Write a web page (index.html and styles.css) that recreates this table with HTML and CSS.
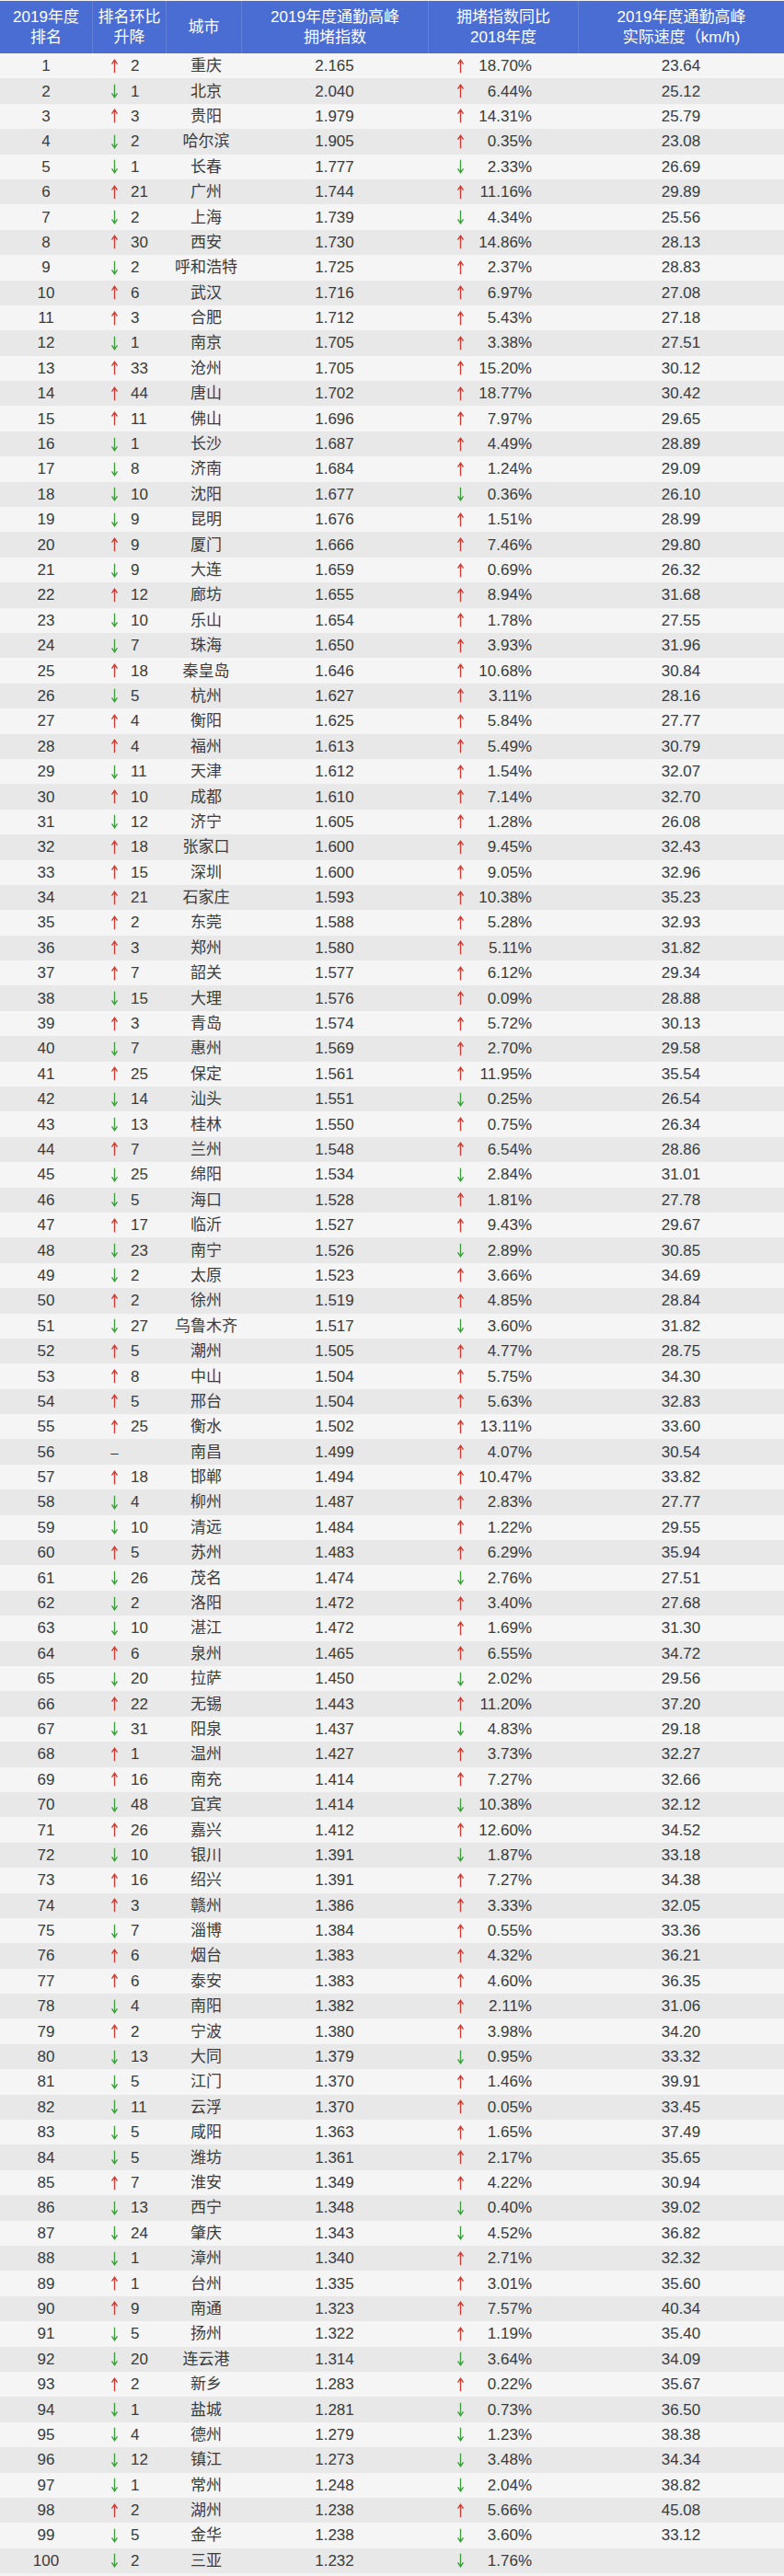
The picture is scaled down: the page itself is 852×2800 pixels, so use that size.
FILE: index.html
```html
<!DOCTYPE html>
<html lang="zh-CN">
<head>
<meta charset="utf-8">
<title>2019年度通勤高峰拥堵指数排名</title>
<link rel="stylesheet" href="styles.css">
</head>
<body>
<svg class="defs" width="0" height="0" aria-hidden="true">
  <symbol id="up" viewBox="0 0 10 18"><path d="M5 17.2V1.6M1.6 6.2L5 1.4L8.4 6.2" fill="none" stroke="currentColor" stroke-width="1.5"/></symbol>
  <symbol id="dn" viewBox="0 0 10 18"><path d="M5 0.8V16.4M1.6 11.8L5 16.6L8.4 11.8" fill="none" stroke="currentColor" stroke-width="1.5"/></symbol>
</svg>
<div class="table">
  <div class="head">
    <div class="hc">2019年度<br>排名</div>
    <div class="hc">排名环比<br>升降</div>
    <div class="hc">城市</div>
    <div class="hc">2019年度通勤高峰<br>拥堵指数</div>
    <div class="hc">拥堵指数同比<br>2018年度</div>
    <div class="hc">2019年度通勤高峰<br>实际速度（km/h)</div>
  </div>
  <div class="rows" id="rows">
<div class="row"><div class="c rank">1</div><div class="c chg"><svg class="ar u"><use href="#up"/></svg><span>2</span></div><div class="c city">重庆</div><div class="c idx">2.165</div><div class="c pc"><svg class="ar u"><use href="#up"/></svg><span>18.70%</span></div><div class="c spd">23.64</div></div>
<div class="row"><div class="c rank">2</div><div class="c chg"><svg class="ar d"><use href="#dn"/></svg><span>1</span></div><div class="c city">北京</div><div class="c idx">2.040</div><div class="c pc"><svg class="ar u"><use href="#up"/></svg><span>6.44%</span></div><div class="c spd">25.12</div></div>
<div class="row"><div class="c rank">3</div><div class="c chg"><svg class="ar u"><use href="#up"/></svg><span>3</span></div><div class="c city">贵阳</div><div class="c idx">1.979</div><div class="c pc"><svg class="ar u"><use href="#up"/></svg><span>14.31%</span></div><div class="c spd">25.79</div></div>
<div class="row"><div class="c rank">4</div><div class="c chg"><svg class="ar d"><use href="#dn"/></svg><span>2</span></div><div class="c city">哈尔滨</div><div class="c idx">1.905</div><div class="c pc"><svg class="ar u"><use href="#up"/></svg><span>0.35%</span></div><div class="c spd">23.08</div></div>
<div class="row"><div class="c rank">5</div><div class="c chg"><svg class="ar d"><use href="#dn"/></svg><span>1</span></div><div class="c city">长春</div><div class="c idx">1.777</div><div class="c pc"><svg class="ar d"><use href="#dn"/></svg><span>2.33%</span></div><div class="c spd">26.69</div></div>
<div class="row"><div class="c rank">6</div><div class="c chg"><svg class="ar u"><use href="#up"/></svg><span>21</span></div><div class="c city">广州</div><div class="c idx">1.744</div><div class="c pc"><svg class="ar u"><use href="#up"/></svg><span>11.16%</span></div><div class="c spd">29.89</div></div>
<div class="row"><div class="c rank">7</div><div class="c chg"><svg class="ar d"><use href="#dn"/></svg><span>2</span></div><div class="c city">上海</div><div class="c idx">1.739</div><div class="c pc"><svg class="ar d"><use href="#dn"/></svg><span>4.34%</span></div><div class="c spd">25.56</div></div>
<div class="row"><div class="c rank">8</div><div class="c chg"><svg class="ar u"><use href="#up"/></svg><span>30</span></div><div class="c city">西安</div><div class="c idx">1.730</div><div class="c pc"><svg class="ar u"><use href="#up"/></svg><span>14.86%</span></div><div class="c spd">28.13</div></div>
<div class="row"><div class="c rank">9</div><div class="c chg"><svg class="ar d"><use href="#dn"/></svg><span>2</span></div><div class="c city">呼和浩特</div><div class="c idx">1.725</div><div class="c pc"><svg class="ar u"><use href="#up"/></svg><span>2.37%</span></div><div class="c spd">28.83</div></div>
<div class="row"><div class="c rank">10</div><div class="c chg"><svg class="ar u"><use href="#up"/></svg><span>6</span></div><div class="c city">武汉</div><div class="c idx">1.716</div><div class="c pc"><svg class="ar u"><use href="#up"/></svg><span>6.97%</span></div><div class="c spd">27.08</div></div>
<div class="row"><div class="c rank">11</div><div class="c chg"><svg class="ar u"><use href="#up"/></svg><span>3</span></div><div class="c city">合肥</div><div class="c idx">1.712</div><div class="c pc"><svg class="ar u"><use href="#up"/></svg><span>5.43%</span></div><div class="c spd">27.18</div></div>
<div class="row"><div class="c rank">12</div><div class="c chg"><svg class="ar d"><use href="#dn"/></svg><span>1</span></div><div class="c city">南京</div><div class="c idx">1.705</div><div class="c pc"><svg class="ar u"><use href="#up"/></svg><span>3.38%</span></div><div class="c spd">27.51</div></div>
<div class="row"><div class="c rank">13</div><div class="c chg"><svg class="ar u"><use href="#up"/></svg><span>33</span></div><div class="c city">沧州</div><div class="c idx">1.705</div><div class="c pc"><svg class="ar u"><use href="#up"/></svg><span>15.20%</span></div><div class="c spd">30.12</div></div>
<div class="row"><div class="c rank">14</div><div class="c chg"><svg class="ar u"><use href="#up"/></svg><span>44</span></div><div class="c city">唐山</div><div class="c idx">1.702</div><div class="c pc"><svg class="ar u"><use href="#up"/></svg><span>18.77%</span></div><div class="c spd">30.42</div></div>
<div class="row"><div class="c rank">15</div><div class="c chg"><svg class="ar u"><use href="#up"/></svg><span>11</span></div><div class="c city">佛山</div><div class="c idx">1.696</div><div class="c pc"><svg class="ar u"><use href="#up"/></svg><span>7.97%</span></div><div class="c spd">29.65</div></div>
<div class="row"><div class="c rank">16</div><div class="c chg"><svg class="ar d"><use href="#dn"/></svg><span>1</span></div><div class="c city">长沙</div><div class="c idx">1.687</div><div class="c pc"><svg class="ar u"><use href="#up"/></svg><span>4.49%</span></div><div class="c spd">28.89</div></div>
<div class="row"><div class="c rank">17</div><div class="c chg"><svg class="ar d"><use href="#dn"/></svg><span>8</span></div><div class="c city">济南</div><div class="c idx">1.684</div><div class="c pc"><svg class="ar u"><use href="#up"/></svg><span>1.24%</span></div><div class="c spd">29.09</div></div>
<div class="row"><div class="c rank">18</div><div class="c chg"><svg class="ar d"><use href="#dn"/></svg><span>10</span></div><div class="c city">沈阳</div><div class="c idx">1.677</div><div class="c pc"><svg class="ar d"><use href="#dn"/></svg><span>0.36%</span></div><div class="c spd">26.10</div></div>
<div class="row"><div class="c rank">19</div><div class="c chg"><svg class="ar d"><use href="#dn"/></svg><span>9</span></div><div class="c city">昆明</div><div class="c idx">1.676</div><div class="c pc"><svg class="ar u"><use href="#up"/></svg><span>1.51%</span></div><div class="c spd">28.99</div></div>
<div class="row"><div class="c rank">20</div><div class="c chg"><svg class="ar u"><use href="#up"/></svg><span>9</span></div><div class="c city">厦门</div><div class="c idx">1.666</div><div class="c pc"><svg class="ar u"><use href="#up"/></svg><span>7.46%</span></div><div class="c spd">29.80</div></div>
<div class="row"><div class="c rank">21</div><div class="c chg"><svg class="ar d"><use href="#dn"/></svg><span>9</span></div><div class="c city">大连</div><div class="c idx">1.659</div><div class="c pc"><svg class="ar u"><use href="#up"/></svg><span>0.69%</span></div><div class="c spd">26.32</div></div>
<div class="row"><div class="c rank">22</div><div class="c chg"><svg class="ar u"><use href="#up"/></svg><span>12</span></div><div class="c city">廊坊</div><div class="c idx">1.655</div><div class="c pc"><svg class="ar u"><use href="#up"/></svg><span>8.94%</span></div><div class="c spd">31.68</div></div>
<div class="row"><div class="c rank">23</div><div class="c chg"><svg class="ar d"><use href="#dn"/></svg><span>10</span></div><div class="c city">乐山</div><div class="c idx">1.654</div><div class="c pc"><svg class="ar u"><use href="#up"/></svg><span>1.78%</span></div><div class="c spd">27.55</div></div>
<div class="row"><div class="c rank">24</div><div class="c chg"><svg class="ar d"><use href="#dn"/></svg><span>7</span></div><div class="c city">珠海</div><div class="c idx">1.650</div><div class="c pc"><svg class="ar u"><use href="#up"/></svg><span>3.93%</span></div><div class="c spd">31.96</div></div>
<div class="row"><div class="c rank">25</div><div class="c chg"><svg class="ar u"><use href="#up"/></svg><span>18</span></div><div class="c city">秦皇岛</div><div class="c idx">1.646</div><div class="c pc"><svg class="ar u"><use href="#up"/></svg><span>10.68%</span></div><div class="c spd">30.84</div></div>
<div class="row"><div class="c rank">26</div><div class="c chg"><svg class="ar d"><use href="#dn"/></svg><span>5</span></div><div class="c city">杭州</div><div class="c idx">1.627</div><div class="c pc"><svg class="ar u"><use href="#up"/></svg><span>3.11%</span></div><div class="c spd">28.16</div></div>
<div class="row"><div class="c rank">27</div><div class="c chg"><svg class="ar u"><use href="#up"/></svg><span>4</span></div><div class="c city">衡阳</div><div class="c idx">1.625</div><div class="c pc"><svg class="ar u"><use href="#up"/></svg><span>5.84%</span></div><div class="c spd">27.77</div></div>
<div class="row"><div class="c rank">28</div><div class="c chg"><svg class="ar u"><use href="#up"/></svg><span>4</span></div><div class="c city">福州</div><div class="c idx">1.613</div><div class="c pc"><svg class="ar u"><use href="#up"/></svg><span>5.49%</span></div><div class="c spd">30.79</div></div>
<div class="row"><div class="c rank">29</div><div class="c chg"><svg class="ar d"><use href="#dn"/></svg><span>11</span></div><div class="c city">天津</div><div class="c idx">1.612</div><div class="c pc"><svg class="ar u"><use href="#up"/></svg><span>1.54%</span></div><div class="c spd">32.07</div></div>
<div class="row"><div class="c rank">30</div><div class="c chg"><svg class="ar u"><use href="#up"/></svg><span>10</span></div><div class="c city">成都</div><div class="c idx">1.610</div><div class="c pc"><svg class="ar u"><use href="#up"/></svg><span>7.14%</span></div><div class="c spd">32.70</div></div>
<div class="row"><div class="c rank">31</div><div class="c chg"><svg class="ar d"><use href="#dn"/></svg><span>12</span></div><div class="c city">济宁</div><div class="c idx">1.605</div><div class="c pc"><svg class="ar u"><use href="#up"/></svg><span>1.28%</span></div><div class="c spd">26.08</div></div>
<div class="row"><div class="c rank">32</div><div class="c chg"><svg class="ar u"><use href="#up"/></svg><span>18</span></div><div class="c city">张家口</div><div class="c idx">1.600</div><div class="c pc"><svg class="ar u"><use href="#up"/></svg><span>9.45%</span></div><div class="c spd">32.43</div></div>
<div class="row"><div class="c rank">33</div><div class="c chg"><svg class="ar u"><use href="#up"/></svg><span>15</span></div><div class="c city">深圳</div><div class="c idx">1.600</div><div class="c pc"><svg class="ar u"><use href="#up"/></svg><span>9.05%</span></div><div class="c spd">32.96</div></div>
<div class="row"><div class="c rank">34</div><div class="c chg"><svg class="ar u"><use href="#up"/></svg><span>21</span></div><div class="c city">石家庄</div><div class="c idx">1.593</div><div class="c pc"><svg class="ar u"><use href="#up"/></svg><span>10.38%</span></div><div class="c spd">35.23</div></div>
<div class="row"><div class="c rank">35</div><div class="c chg"><svg class="ar u"><use href="#up"/></svg><span>2</span></div><div class="c city">东莞</div><div class="c idx">1.588</div><div class="c pc"><svg class="ar u"><use href="#up"/></svg><span>5.28%</span></div><div class="c spd">32.93</div></div>
<div class="row"><div class="c rank">36</div><div class="c chg"><svg class="ar u"><use href="#up"/></svg><span>3</span></div><div class="c city">郑州</div><div class="c idx">1.580</div><div class="c pc"><svg class="ar u"><use href="#up"/></svg><span>5.11%</span></div><div class="c spd">31.82</div></div>
<div class="row"><div class="c rank">37</div><div class="c chg"><svg class="ar u"><use href="#up"/></svg><span>7</span></div><div class="c city">韶关</div><div class="c idx">1.577</div><div class="c pc"><svg class="ar u"><use href="#up"/></svg><span>6.12%</span></div><div class="c spd">29.34</div></div>
<div class="row"><div class="c rank">38</div><div class="c chg"><svg class="ar d"><use href="#dn"/></svg><span>15</span></div><div class="c city">大理</div><div class="c idx">1.576</div><div class="c pc"><svg class="ar u"><use href="#up"/></svg><span>0.09%</span></div><div class="c spd">28.88</div></div>
<div class="row"><div class="c rank">39</div><div class="c chg"><svg class="ar u"><use href="#up"/></svg><span>3</span></div><div class="c city">青岛</div><div class="c idx">1.574</div><div class="c pc"><svg class="ar u"><use href="#up"/></svg><span>5.72%</span></div><div class="c spd">30.13</div></div>
<div class="row"><div class="c rank">40</div><div class="c chg"><svg class="ar d"><use href="#dn"/></svg><span>7</span></div><div class="c city">惠州</div><div class="c idx">1.569</div><div class="c pc"><svg class="ar u"><use href="#up"/></svg><span>2.70%</span></div><div class="c spd">29.58</div></div>
<div class="row"><div class="c rank">41</div><div class="c chg"><svg class="ar u"><use href="#up"/></svg><span>25</span></div><div class="c city">保定</div><div class="c idx">1.561</div><div class="c pc"><svg class="ar u"><use href="#up"/></svg><span>11.95%</span></div><div class="c spd">35.54</div></div>
<div class="row"><div class="c rank">42</div><div class="c chg"><svg class="ar d"><use href="#dn"/></svg><span>14</span></div><div class="c city">汕头</div><div class="c idx">1.551</div><div class="c pc"><svg class="ar d"><use href="#dn"/></svg><span>0.25%</span></div><div class="c spd">26.54</div></div>
<div class="row"><div class="c rank">43</div><div class="c chg"><svg class="ar d"><use href="#dn"/></svg><span>13</span></div><div class="c city">桂林</div><div class="c idx">1.550</div><div class="c pc"><svg class="ar u"><use href="#up"/></svg><span>0.75%</span></div><div class="c spd">26.34</div></div>
<div class="row"><div class="c rank">44</div><div class="c chg"><svg class="ar u"><use href="#up"/></svg><span>7</span></div><div class="c city">兰州</div><div class="c idx">1.548</div><div class="c pc"><svg class="ar u"><use href="#up"/></svg><span>6.54%</span></div><div class="c spd">28.86</div></div>
<div class="row"><div class="c rank">45</div><div class="c chg"><svg class="ar d"><use href="#dn"/></svg><span>25</span></div><div class="c city">绵阳</div><div class="c idx">1.534</div><div class="c pc"><svg class="ar d"><use href="#dn"/></svg><span>2.84%</span></div><div class="c spd">31.01</div></div>
<div class="row"><div class="c rank">46</div><div class="c chg"><svg class="ar d"><use href="#dn"/></svg><span>5</span></div><div class="c city">海口</div><div class="c idx">1.528</div><div class="c pc"><svg class="ar u"><use href="#up"/></svg><span>1.81%</span></div><div class="c spd">27.78</div></div>
<div class="row"><div class="c rank">47</div><div class="c chg"><svg class="ar u"><use href="#up"/></svg><span>17</span></div><div class="c city">临沂</div><div class="c idx">1.527</div><div class="c pc"><svg class="ar u"><use href="#up"/></svg><span>9.43%</span></div><div class="c spd">29.67</div></div>
<div class="row"><div class="c rank">48</div><div class="c chg"><svg class="ar d"><use href="#dn"/></svg><span>23</span></div><div class="c city">南宁</div><div class="c idx">1.526</div><div class="c pc"><svg class="ar d"><use href="#dn"/></svg><span>2.89%</span></div><div class="c spd">30.85</div></div>
<div class="row"><div class="c rank">49</div><div class="c chg"><svg class="ar d"><use href="#dn"/></svg><span>2</span></div><div class="c city">太原</div><div class="c idx">1.523</div><div class="c pc"><svg class="ar u"><use href="#up"/></svg><span>3.66%</span></div><div class="c spd">34.69</div></div>
<div class="row"><div class="c rank">50</div><div class="c chg"><svg class="ar u"><use href="#up"/></svg><span>2</span></div><div class="c city">徐州</div><div class="c idx">1.519</div><div class="c pc"><svg class="ar u"><use href="#up"/></svg><span>4.85%</span></div><div class="c spd">28.84</div></div>
<div class="row"><div class="c rank">51</div><div class="c chg"><svg class="ar d"><use href="#dn"/></svg><span>27</span></div><div class="c city">乌鲁木齐</div><div class="c idx">1.517</div><div class="c pc"><svg class="ar d"><use href="#dn"/></svg><span>3.60%</span></div><div class="c spd">31.82</div></div>
<div class="row"><div class="c rank">52</div><div class="c chg"><svg class="ar u"><use href="#up"/></svg><span>5</span></div><div class="c city">潮州</div><div class="c idx">1.505</div><div class="c pc"><svg class="ar u"><use href="#up"/></svg><span>4.77%</span></div><div class="c spd">28.75</div></div>
<div class="row"><div class="c rank">53</div><div class="c chg"><svg class="ar u"><use href="#up"/></svg><span>8</span></div><div class="c city">中山</div><div class="c idx">1.504</div><div class="c pc"><svg class="ar u"><use href="#up"/></svg><span>5.75%</span></div><div class="c spd">34.30</div></div>
<div class="row"><div class="c rank">54</div><div class="c chg"><svg class="ar u"><use href="#up"/></svg><span>5</span></div><div class="c city">邢台</div><div class="c idx">1.504</div><div class="c pc"><svg class="ar u"><use href="#up"/></svg><span>5.63%</span></div><div class="c spd">32.83</div></div>
<div class="row"><div class="c rank">55</div><div class="c chg"><svg class="ar u"><use href="#up"/></svg><span>25</span></div><div class="c city">衡水</div><div class="c idx">1.502</div><div class="c pc"><svg class="ar u"><use href="#up"/></svg><span>13.11%</span></div><div class="c spd">33.60</div></div>
<div class="row"><div class="c rank">56</div><div class="c chg"><span class="dash">–</span></div><div class="c city">南昌</div><div class="c idx">1.499</div><div class="c pc"><svg class="ar u"><use href="#up"/></svg><span>4.07%</span></div><div class="c spd">30.54</div></div>
<div class="row"><div class="c rank">57</div><div class="c chg"><svg class="ar u"><use href="#up"/></svg><span>18</span></div><div class="c city">邯郸</div><div class="c idx">1.494</div><div class="c pc"><svg class="ar u"><use href="#up"/></svg><span>10.47%</span></div><div class="c spd">33.82</div></div>
<div class="row"><div class="c rank">58</div><div class="c chg"><svg class="ar d"><use href="#dn"/></svg><span>4</span></div><div class="c city">柳州</div><div class="c idx">1.487</div><div class="c pc"><svg class="ar u"><use href="#up"/></svg><span>2.83%</span></div><div class="c spd">27.77</div></div>
<div class="row"><div class="c rank">59</div><div class="c chg"><svg class="ar d"><use href="#dn"/></svg><span>10</span></div><div class="c city">清远</div><div class="c idx">1.484</div><div class="c pc"><svg class="ar u"><use href="#up"/></svg><span>1.22%</span></div><div class="c spd">29.55</div></div>
<div class="row"><div class="c rank">60</div><div class="c chg"><svg class="ar u"><use href="#up"/></svg><span>5</span></div><div class="c city">苏州</div><div class="c idx">1.483</div><div class="c pc"><svg class="ar u"><use href="#up"/></svg><span>6.29%</span></div><div class="c spd">35.94</div></div>
<div class="row"><div class="c rank">61</div><div class="c chg"><svg class="ar d"><use href="#dn"/></svg><span>26</span></div><div class="c city">茂名</div><div class="c idx">1.474</div><div class="c pc"><svg class="ar d"><use href="#dn"/></svg><span>2.76%</span></div><div class="c spd">27.51</div></div>
<div class="row"><div class="c rank">62</div><div class="c chg"><svg class="ar d"><use href="#dn"/></svg><span>2</span></div><div class="c city">洛阳</div><div class="c idx">1.472</div><div class="c pc"><svg class="ar u"><use href="#up"/></svg><span>3.40%</span></div><div class="c spd">27.68</div></div>
<div class="row"><div class="c rank">63</div><div class="c chg"><svg class="ar d"><use href="#dn"/></svg><span>10</span></div><div class="c city">湛江</div><div class="c idx">1.472</div><div class="c pc"><svg class="ar u"><use href="#up"/></svg><span>1.69%</span></div><div class="c spd">31.30</div></div>
<div class="row"><div class="c rank">64</div><div class="c chg"><svg class="ar u"><use href="#up"/></svg><span>6</span></div><div class="c city">泉州</div><div class="c idx">1.465</div><div class="c pc"><svg class="ar u"><use href="#up"/></svg><span>6.55%</span></div><div class="c spd">34.72</div></div>
<div class="row"><div class="c rank">65</div><div class="c chg"><svg class="ar d"><use href="#dn"/></svg><span>20</span></div><div class="c city">拉萨</div><div class="c idx">1.450</div><div class="c pc"><svg class="ar d"><use href="#dn"/></svg><span>2.02%</span></div><div class="c spd">29.56</div></div>
<div class="row"><div class="c rank">66</div><div class="c chg"><svg class="ar u"><use href="#up"/></svg><span>22</span></div><div class="c city">无锡</div><div class="c idx">1.443</div><div class="c pc"><svg class="ar u"><use href="#up"/></svg><span>11.20%</span></div><div class="c spd">37.20</div></div>
<div class="row"><div class="c rank">67</div><div class="c chg"><svg class="ar d"><use href="#dn"/></svg><span>31</span></div><div class="c city">阳泉</div><div class="c idx">1.437</div><div class="c pc"><svg class="ar d"><use href="#dn"/></svg><span>4.83%</span></div><div class="c spd">29.18</div></div>
<div class="row"><div class="c rank">68</div><div class="c chg"><svg class="ar u"><use href="#up"/></svg><span>1</span></div><div class="c city">温州</div><div class="c idx">1.427</div><div class="c pc"><svg class="ar u"><use href="#up"/></svg><span>3.73%</span></div><div class="c spd">32.27</div></div>
<div class="row"><div class="c rank">69</div><div class="c chg"><svg class="ar u"><use href="#up"/></svg><span>16</span></div><div class="c city">南充</div><div class="c idx">1.414</div><div class="c pc"><svg class="ar u"><use href="#up"/></svg><span>7.27%</span></div><div class="c spd">32.66</div></div>
<div class="row"><div class="c rank">70</div><div class="c chg"><svg class="ar d"><use href="#dn"/></svg><span>48</span></div><div class="c city">宜宾</div><div class="c idx">1.414</div><div class="c pc"><svg class="ar d"><use href="#dn"/></svg><span>10.38%</span></div><div class="c spd">32.12</div></div>
<div class="row"><div class="c rank">71</div><div class="c chg"><svg class="ar u"><use href="#up"/></svg><span>26</span></div><div class="c city">嘉兴</div><div class="c idx">1.412</div><div class="c pc"><svg class="ar u"><use href="#up"/></svg><span>12.60%</span></div><div class="c spd">34.52</div></div>
<div class="row"><div class="c rank">72</div><div class="c chg"><svg class="ar d"><use href="#dn"/></svg><span>10</span></div><div class="c city">银川</div><div class="c idx">1.391</div><div class="c pc"><svg class="ar d"><use href="#dn"/></svg><span>1.87%</span></div><div class="c spd">33.18</div></div>
<div class="row"><div class="c rank">73</div><div class="c chg"><svg class="ar u"><use href="#up"/></svg><span>16</span></div><div class="c city">绍兴</div><div class="c idx">1.391</div><div class="c pc"><svg class="ar u"><use href="#up"/></svg><span>7.27%</span></div><div class="c spd">34.38</div></div>
<div class="row"><div class="c rank">74</div><div class="c chg"><svg class="ar u"><use href="#up"/></svg><span>3</span></div><div class="c city">赣州</div><div class="c idx">1.386</div><div class="c pc"><svg class="ar u"><use href="#up"/></svg><span>3.33%</span></div><div class="c spd">32.05</div></div>
<div class="row"><div class="c rank">75</div><div class="c chg"><svg class="ar d"><use href="#dn"/></svg><span>7</span></div><div class="c city">淄博</div><div class="c idx">1.384</div><div class="c pc"><svg class="ar u"><use href="#up"/></svg><span>0.55%</span></div><div class="c spd">33.36</div></div>
<div class="row"><div class="c rank">76</div><div class="c chg"><svg class="ar u"><use href="#up"/></svg><span>6</span></div><div class="c city">烟台</div><div class="c idx">1.383</div><div class="c pc"><svg class="ar u"><use href="#up"/></svg><span>4.32%</span></div><div class="c spd">36.21</div></div>
<div class="row"><div class="c rank">77</div><div class="c chg"><svg class="ar u"><use href="#up"/></svg><span>6</span></div><div class="c city">泰安</div><div class="c idx">1.383</div><div class="c pc"><svg class="ar u"><use href="#up"/></svg><span>4.60%</span></div><div class="c spd">36.35</div></div>
<div class="row"><div class="c rank">78</div><div class="c chg"><svg class="ar d"><use href="#dn"/></svg><span>4</span></div><div class="c city">南阳</div><div class="c idx">1.382</div><div class="c pc"><svg class="ar u"><use href="#up"/></svg><span>2.11%</span></div><div class="c spd">31.06</div></div>
<div class="row"><div class="c rank">79</div><div class="c chg"><svg class="ar u"><use href="#up"/></svg><span>2</span></div><div class="c city">宁波</div><div class="c idx">1.380</div><div class="c pc"><svg class="ar u"><use href="#up"/></svg><span>3.98%</span></div><div class="c spd">34.20</div></div>
<div class="row"><div class="c rank">80</div><div class="c chg"><svg class="ar d"><use href="#dn"/></svg><span>13</span></div><div class="c city">大同</div><div class="c idx">1.379</div><div class="c pc"><svg class="ar d"><use href="#dn"/></svg><span>0.95%</span></div><div class="c spd">33.32</div></div>
<div class="row"><div class="c rank">81</div><div class="c chg"><svg class="ar d"><use href="#dn"/></svg><span>5</span></div><div class="c city">江门</div><div class="c idx">1.370</div><div class="c pc"><svg class="ar u"><use href="#up"/></svg><span>1.46%</span></div><div class="c spd">39.91</div></div>
<div class="row"><div class="c rank">82</div><div class="c chg"><svg class="ar d"><use href="#dn"/></svg><span>11</span></div><div class="c city">云浮</div><div class="c idx">1.370</div><div class="c pc"><svg class="ar u"><use href="#up"/></svg><span>0.05%</span></div><div class="c spd">33.45</div></div>
<div class="row"><div class="c rank">83</div><div class="c chg"><svg class="ar d"><use href="#dn"/></svg><span>5</span></div><div class="c city">咸阳</div><div class="c idx">1.363</div><div class="c pc"><svg class="ar u"><use href="#up"/></svg><span>1.65%</span></div><div class="c spd">37.49</div></div>
<div class="row"><div class="c rank">84</div><div class="c chg"><svg class="ar d"><use href="#dn"/></svg><span>5</span></div><div class="c city">潍坊</div><div class="c idx">1.361</div><div class="c pc"><svg class="ar u"><use href="#up"/></svg><span>2.17%</span></div><div class="c spd">35.65</div></div>
<div class="row"><div class="c rank">85</div><div class="c chg"><svg class="ar u"><use href="#up"/></svg><span>7</span></div><div class="c city">淮安</div><div class="c idx">1.349</div><div class="c pc"><svg class="ar u"><use href="#up"/></svg><span>4.22%</span></div><div class="c spd">30.94</div></div>
<div class="row"><div class="c rank">86</div><div class="c chg"><svg class="ar d"><use href="#dn"/></svg><span>13</span></div><div class="c city">西宁</div><div class="c idx">1.348</div><div class="c pc"><svg class="ar d"><use href="#dn"/></svg><span>0.40%</span></div><div class="c spd">39.02</div></div>
<div class="row"><div class="c rank">87</div><div class="c chg"><svg class="ar d"><use href="#dn"/></svg><span>24</span></div><div class="c city">肇庆</div><div class="c idx">1.343</div><div class="c pc"><svg class="ar d"><use href="#dn"/></svg><span>4.52%</span></div><div class="c spd">36.82</div></div>
<div class="row"><div class="c rank">88</div><div class="c chg"><svg class="ar d"><use href="#dn"/></svg><span>1</span></div><div class="c city">漳州</div><div class="c idx">1.340</div><div class="c pc"><svg class="ar u"><use href="#up"/></svg><span>2.71%</span></div><div class="c spd">32.32</div></div>
<div class="row"><div class="c rank">89</div><div class="c chg"><svg class="ar u"><use href="#up"/></svg><span>1</span></div><div class="c city">台州</div><div class="c idx">1.335</div><div class="c pc"><svg class="ar u"><use href="#up"/></svg><span>3.01%</span></div><div class="c spd">35.60</div></div>
<div class="row"><div class="c rank">90</div><div class="c chg"><svg class="ar u"><use href="#up"/></svg><span>9</span></div><div class="c city">南通</div><div class="c idx">1.323</div><div class="c pc"><svg class="ar u"><use href="#up"/></svg><span>7.57%</span></div><div class="c spd">40.34</div></div>
<div class="row"><div class="c rank">91</div><div class="c chg"><svg class="ar d"><use href="#dn"/></svg><span>5</span></div><div class="c city">扬州</div><div class="c idx">1.322</div><div class="c pc"><svg class="ar u"><use href="#up"/></svg><span>1.19%</span></div><div class="c spd">35.40</div></div>
<div class="row"><div class="c rank">92</div><div class="c chg"><svg class="ar d"><use href="#dn"/></svg><span>20</span></div><div class="c city">连云港</div><div class="c idx">1.314</div><div class="c pc"><svg class="ar d"><use href="#dn"/></svg><span>3.64%</span></div><div class="c spd">34.09</div></div>
<div class="row"><div class="c rank">93</div><div class="c chg"><svg class="ar u"><use href="#up"/></svg><span>2</span></div><div class="c city">新乡</div><div class="c idx">1.283</div><div class="c pc"><svg class="ar u"><use href="#up"/></svg><span>0.22%</span></div><div class="c spd">35.67</div></div>
<div class="row"><div class="c rank">94</div><div class="c chg"><svg class="ar d"><use href="#dn"/></svg><span>1</span></div><div class="c city">盐城</div><div class="c idx">1.281</div><div class="c pc"><svg class="ar d"><use href="#dn"/></svg><span>0.73%</span></div><div class="c spd">36.50</div></div>
<div class="row"><div class="c rank">95</div><div class="c chg"><svg class="ar d"><use href="#dn"/></svg><span>4</span></div><div class="c city">德州</div><div class="c idx">1.279</div><div class="c pc"><svg class="ar d"><use href="#dn"/></svg><span>1.23%</span></div><div class="c spd">38.38</div></div>
<div class="row"><div class="c rank">96</div><div class="c chg"><svg class="ar d"><use href="#dn"/></svg><span>12</span></div><div class="c city">镇江</div><div class="c idx">1.273</div><div class="c pc"><svg class="ar d"><use href="#dn"/></svg><span>3.48%</span></div><div class="c spd">34.34</div></div>
<div class="row"><div class="c rank">97</div><div class="c chg"><svg class="ar d"><use href="#dn"/></svg><span>1</span></div><div class="c city">常州</div><div class="c idx">1.248</div><div class="c pc"><svg class="ar d"><use href="#dn"/></svg><span>2.04%</span></div><div class="c spd">38.82</div></div>
<div class="row"><div class="c rank">98</div><div class="c chg"><svg class="ar u"><use href="#up"/></svg><span>2</span></div><div class="c city">湖州</div><div class="c idx">1.238</div><div class="c pc"><svg class="ar u"><use href="#up"/></svg><span>5.66%</span></div><div class="c spd">45.08</div></div>
<div class="row"><div class="c rank">99</div><div class="c chg"><svg class="ar d"><use href="#dn"/></svg><span>5</span></div><div class="c city">金华</div><div class="c idx">1.238</div><div class="c pc"><svg class="ar d"><use href="#dn"/></svg><span>3.60%</span></div><div class="c spd">33.12</div></div>
<div class="row"><div class="c rank">100</div><div class="c chg"><svg class="ar d"><use href="#dn"/></svg><span>2</span></div><div class="c city">三亚</div><div class="c idx">1.232</div><div class="c pc"><svg class="ar d"><use href="#dn"/></svg><span>1.76%</span></div><div class="c spd"></div></div>
  </div>
</div>
</body>
</html>
```
FILE: styles.css
```css
html, body {
  margin: 0;
  padding: 0;
  background: #f2f2f2;
}
body {
  font-family: "Liberation Sans", "Noto Sans CJK SC", sans-serif;
  color: #3b3b3b;
  font-size: 17px;
}
.defs {
  display: block;
  width: 0;
  height: 0;
  overflow: hidden;
}
.table {
  width: 852px;
  padding-top: 1px;
}
.head, .row {
  display: grid;
  grid-template-columns: 100px 80px 82px 203px 163px 224px;
}
.head {
  height: 57px;
  background: #4a6dd4;
  color: #ffffff;
  font-size: 17px;
  line-height: 22px;
}
.hc {
  display: flex;
  align-items: center;
  justify-content: center;
  text-align: center;
  border-left: 1px solid rgba(255, 255, 255, 0.14);
}
.hc:first-child {
  border-left: none;
}
.row {
  height: 27.4px;
  background: #f5f5f5;
}
.row:nth-child(even) {
  background: #e8e8e8;
}
.c {
  display: flex;
  align-items: center;
  white-space: nowrap;
  line-height: 1;
}
.rank, .city, .idx, .spd {
  justify-content: center;
}
.rank { padding-right: 0; }
.city { padding-left: 6px; }
.idx { padding-left: 0; }
.spd { padding-right: 0; }
.chg {
  padding-left: 20px;
  gap: 13px;
}
.dash {
  width: 9px;
  text-align: center;
  color: #333;
  font-size: 15px;
}
.pc {
  justify-content: space-between;
  padding-left: 31px;
  padding-right: 50px;
}
.ar {
  width: 9px;
  height: 16px;
  flex: none;
}
.ar.u { color: #cf3b33; }
.ar.d { color: #3e9e3e; }
```
